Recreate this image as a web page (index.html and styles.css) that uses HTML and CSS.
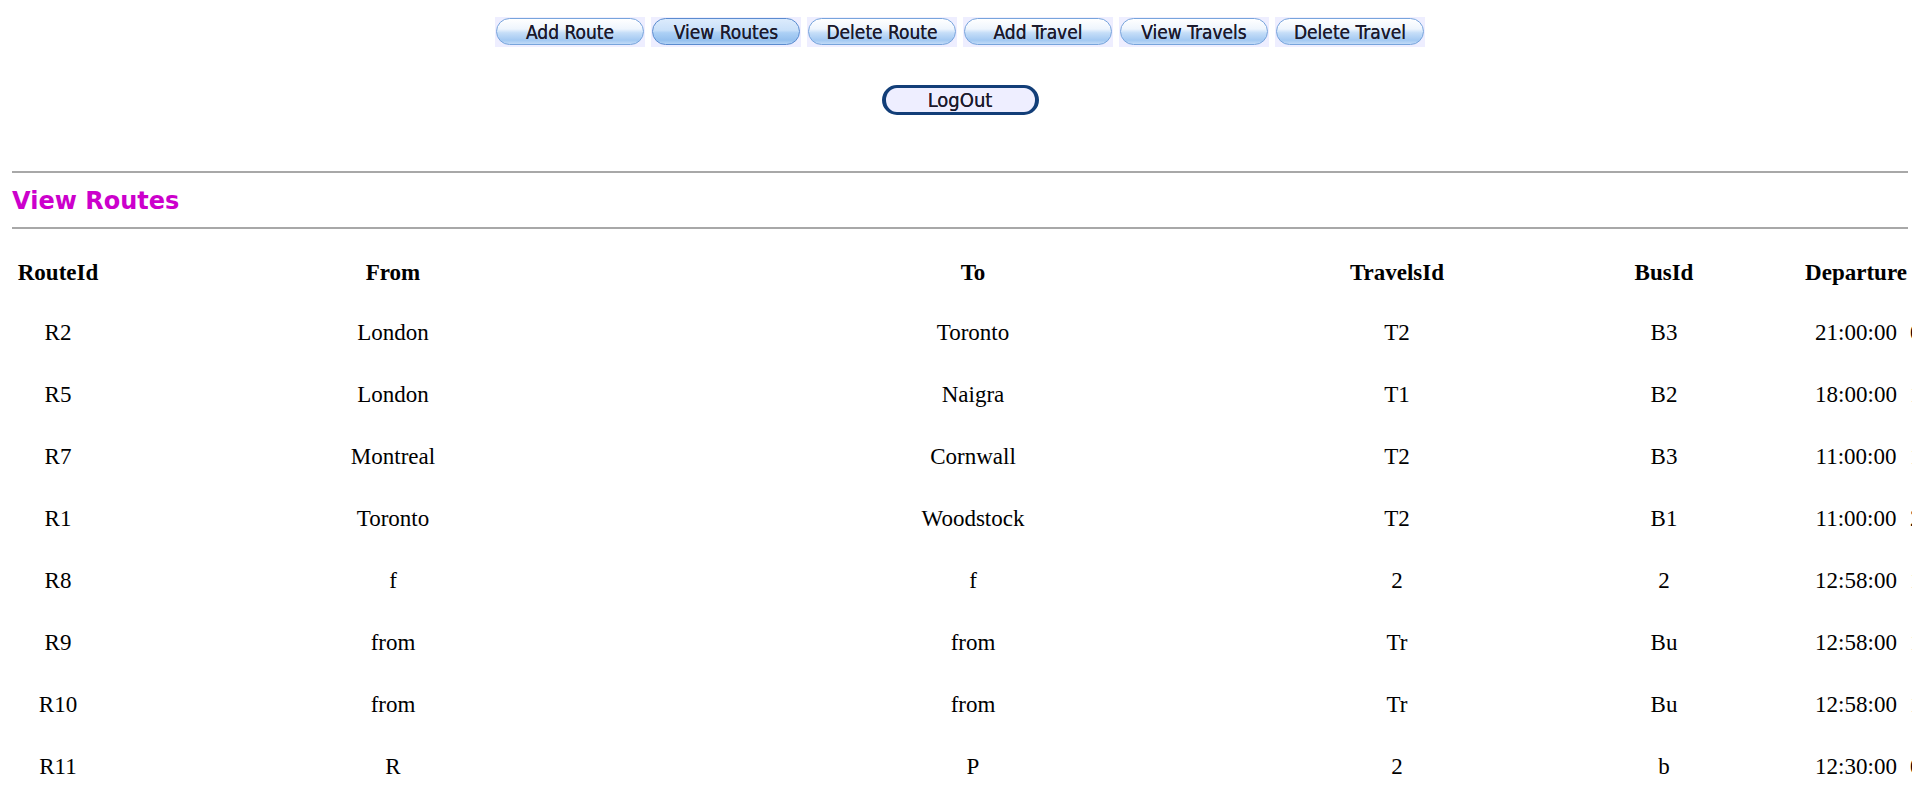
FILE: index.html
```html
<!DOCTYPE html>
<html>
<head>
<meta charset="utf-8">
<title>View Routes</title>
<link rel="stylesheet" href="styles.css">
</head>
<body>
<div class="nav">
  <a class="btn"><span class="pill">Add Route</span></a>
  <a class="btn active"><span class="pill">View Routes</span></a>
  <a class="btn"><span class="pill">Delete Route</span></a>
  <a class="btn"><span class="pill">Add Travel</span></a>
  <a class="btn"><span class="pill">View Travels</span></a>
  <a class="btn"><span class="pill">Delete Travel</span></a>
</div>
<div class="logout-row">
  <a class="logout">LogOut</a>
</div>
<hr class="rule first">
<h2 class="title">View Routes</h2>
<hr class="rule">
<table class="routes">
  <colgroup>
    <col class="c1"><col class="c2"><col class="c3"><col class="c4"><col class="c5"><col class="c6"><col class="c7"><col class="c8">
  </colgroup>
  <thead>
    <tr><th>RouteId</th><th>From</th><th>To</th><th>TravelsId</th><th>BusId</th><th>Departure</th><th>Arrival</th><th>Fare</th></tr>
  </thead>
  <tbody>
    <tr><td>R2</td><td>London</td><td>Toronto</td><td>T2</td><td>B3</td><td>21:00:00</td><td>06:00:00</td><td>50</td></tr>
    <tr><td>R5</td><td>London</td><td>Naigra</td><td>T1</td><td>B2</td><td>18:00:00</td><td>10:00:00</td><td>40</td></tr>
    <tr><td>R7</td><td>Montreal</td><td>Cornwall</td><td>T2</td><td>B3</td><td>11:00:00</td><td>15:00:00</td><td>30</td></tr>
    <tr><td>R1</td><td>Toronto</td><td>Woodstock</td><td>T2</td><td>B1</td><td>11:00:00</td><td>22:00:00</td><td>60</td></tr>
    <tr><td>R8</td><td>f</td><td>f</td><td>2</td><td>2</td><td>12:58:00</td><td>12:58:00</td><td>2</td></tr>
    <tr><td>R9</td><td>from</td><td>from</td><td>Tr</td><td>Bu</td><td>12:58:00</td><td>12:58:00</td><td>2</td></tr>
    <tr><td>R10</td><td>from</td><td>from</td><td>Tr</td><td>Bu</td><td>12:58:00</td><td>12:58:00</td><td>2</td></tr>
    <tr><td>R11</td><td>R</td><td>P</td><td>2</td><td>b</td><td>12:30:00</td><td>01:30:00</td><td>2</td></tr>
    <tr><td>R12</td><td>London</td><td>Toronto</td><td>T1</td><td>B1</td><td>09:00:00</td><td>12:00:00</td><td>45</td></tr>
  </tbody>
</table>
</body>
</html>
```

FILE: styles.css
```css
html {
  overflow: hidden;
}

body {
  margin: 8px;
  background: #ffffff;
  color: #000000;
  font-family: "Liberation Serif", "Times New Roman", serif;
}

.nav {
  display: flex;
  justify-content: center;
  gap: 6px;
  padding-top: 9px;
}

.btn {
  display: block;
  width: 150px;
  height: 30px;
  background: #eeeeff;
  box-sizing: border-box;
  padding: 1px 1px 2px 1px;
  cursor: pointer;
}

.pill {
  display: flex;
  align-items: center;
  justify-content: center;
  height: 100%;
  box-sizing: border-box;
  border: 1px solid #77a4dc;
  border-radius: 14px;
  background: linear-gradient(#ffffff 0%, #eef5fd 40%, #c6def8 55%, #a3c9f2 85%, #c2dbf7 100%);
  font-family: "DejaVu Sans Condensed", "DejaVu Sans", sans-serif;
  font-stretch: condensed;
  font-size: 19px;
  color: #1c1a2c;
  text-shadow: 0 0 0.4px #1c1a2c;
}

.btn.active .pill {
  background: linear-gradient(#dcebfc 0%, #c9e0f9 45%, #acd0f5 55%, #95c0ee 85%, #b3d3f5 100%);
  border-color: #5a8bcf;
}

.logout-row {
  display: flex;
  justify-content: center;
  margin-top: 38px;
}

.logout {
  display: flex;
  align-items: center;
  justify-content: center;
  width: 157px;
  height: 30px;
  box-sizing: border-box;
  background: #eeeeff;
  border: 3px solid #123e78;
  border-left-width: 4px;
  border-right-width: 4px;
  border-radius: 15px;
  font-family: "DejaVu Sans Condensed", "DejaVu Sans", sans-serif;
  font-stretch: condensed;
  font-size: 20px;
  color: #1c1a2c;
  text-shadow: 0 0 0.4px #1c1a2c;
  cursor: pointer;
}

.rule {
  border: none;
  border-top: 2px solid #a8a8a8;
  height: 0;
  margin: 0 4px;
}

.rule.first {
  margin-top: 56px;
}

.title {
  margin: 0 4px;
  padding: 12px 0 10px;
  font-family: "DejaVu Sans", Verdana, sans-serif;
  font-weight: bold;
  font-size: 24px;
  line-height: 32px;
  color: #cc00cc;
}

.routes {
  margin-top: 15px;
  border-collapse: collapse;
  table-layout: fixed;
  width: 2100px;
  font-size: 23px;
}

.routes th,
.routes td {
  padding: 0;
  height: 62px;
  text-align: center;
  vertical-align: middle;
  line-height: 26px;
}

.routes th {
  height: 58px;
  font-weight: bold;
}

.c1 { width: 100px; }
.c2 { width: 570px; }
.c3 { width: 590px; }
.c4 { width: 258px; }
.c5 { width: 276px; }
.c6 { width: 108px; }
.c7 { width: 82px; }
.c8 { width: 116px; }
```
